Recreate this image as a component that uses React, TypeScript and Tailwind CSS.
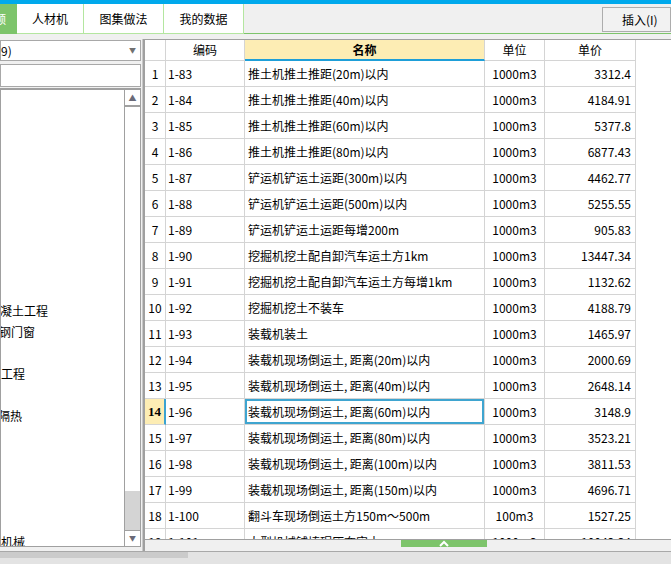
import React from "react";

type Row = { no: number; code: string; name: string; unit: string; price: string };

const C = ",\u2009";

const ROWS: Row[] = [
  { no: 1, code: "1-83", name: "推土机推土推距(20m)以内", unit: "1000m3", price: "3312.4" },
  { no: 2, code: "1-84", name: "推土机推土推距(40m)以内", unit: "1000m3", price: "4184.91" },
  { no: 3, code: "1-85", name: "推土机推土推距(60m)以内", unit: "1000m3", price: "5377.8" },
  { no: 4, code: "1-86", name: "推土机推土推距(80m)以内", unit: "1000m3", price: "6877.43" },
  { no: 5, code: "1-87", name: "铲运机铲运土运距(300m)以内", unit: "1000m3", price: "4462.77" },
  { no: 6, code: "1-88", name: "铲运机铲运土运距(500m)以内", unit: "1000m3", price: "5255.55" },
  { no: 7, code: "1-89", name: "铲运机铲运土运距每增200m", unit: "1000m3", price: "905.83" },
  { no: 8, code: "1-90", name: "挖掘机挖土配自卸汽车运土方1km", unit: "1000m3", price: "13447.34" },
  { no: 9, code: "1-91", name: "挖掘机挖土配自卸汽车运土方每增1km", unit: "1000m3", price: "1132.62" },
  { no: 10, code: "1-92", name: "挖掘机挖土不装车", unit: "1000m3", price: "4188.79" },
  { no: 11, code: "1-93", name: "装载机装土", unit: "1000m3", price: "1465.97" },
  { no: 12, code: "1-94", name: `装载机现场倒运土${C}距离(20m)以内`, unit: "1000m3", price: "2000.69" },
  { no: 13, code: "1-95", name: `装载机现场倒运土${C}距离(40m)以内`, unit: "1000m3", price: "2648.14" },
  { no: 14, code: "1-96", name: `装载机现场倒运土${C}距离(60m)以内`, unit: "1000m3", price: "3148.9" },
  { no: 15, code: "1-97", name: `装载机现场倒运土${C}距离(80m)以内`, unit: "1000m3", price: "3523.21" },
  { no: 16, code: "1-98", name: `装载机现场倒运土${C}距离(100m)以内`, unit: "1000m3", price: "3811.53" },
  { no: 17, code: "1-99", name: `装载机现场倒运土${C}距离(150m)以内`, unit: "1000m3", price: "4696.71" },
  { no: 18, code: "1-100", name: "翻斗车现场倒运土方150m～500m", unit: "100m3", price: "1527.25" },
  { no: 19, code: "1-101", name: "大型机械铺填碾压夯实土", unit: "1000m3", price: "10042.34" },
];

// visible bits of the tree, keyed by row index (21px rows)
const TREE: Record<number, { text: string; shift: string }> = {
  10: { text: "凝土工程", shift: "-ml-[1px]" },
  11: { text: "钢门窗", shift: "-ml-[2px]" },
  13: { text: "工程", shift: "ml-0" },
  15: { text: "隔热", shift: "-ml-[3px]" },
  21: { text: "机械", shift: "ml-0" },
};

const SELECTED = 14;

export default function App() {
  return (
    <div className="w-[671px] h-[564px] overflow-hidden bg-[#f0f0f0] flex flex-col font-['Noto_Sans_CJK_SC',sans-serif] text-[12px] leading-none text-black">
      <div className="h-[4px] bg-[#00a9ec] shrink-0" />

      {/* tabs */}
      <div className="h-[30px] flex shrink-0">
        <div className="w-[17px] bg-[#7dc46b] overflow-hidden text-white flex items-center">
          <span className="-ml-[6px] whitespace-nowrap">额</span>
        </div>
        <div className="w-[67px] bg-white border-r border-b border-[#b4e6a0] flex items-center justify-center">人材机</div>
        <div className="w-[80px] bg-white border-r border-b border-[#b4e6a0] flex items-center justify-center">图集做法</div>
        <div className="w-[80px] bg-white border-r border-b border-[#b4e6a0] flex items-center justify-center">我的数据</div>
        <div className="flex-1 border-b border-[#7dc46b] flex justify-end items-start pt-[3px]">
          <div className="w-[69px] h-[25px] border border-[#adadad] bg-[#f2f2f2] flex items-center pl-[19px] whitespace-nowrap">
            插入(I)
          </div>
        </div>
      </div>

      <div className="h-[5px] shrink-0" />

      {/* main */}
      <div className="h-[512px] flex shrink-0">
        {/* left panel */}
        <div className="w-[141px] flex flex-col">
          <div className="mt-[1px] h-[21px] bg-white border border-[#a8a8a8] flex items-center justify-between pr-[4px]">
            <span>9)</span>
            <span className="text-[7px] text-[#707070]">▼</span>
          </div>
          <div className="mt-[3px] h-[23px] bg-white border border-[#a8a8a8]" />
          <div className="mt-[1px] h-[459px] bg-white border border-t-2 border-[#a0a0a0] flex">
            <div className="flex-1 overflow-hidden">
              {Array.from({ length: 22 }).map((_, i) => (
                <div key={i} className="h-[21px] flex items-center whitespace-nowrap">
                  {TREE[i] ? <span className={TREE[i].shift}>{TREE[i].text}</span> : null}
                </div>
              ))}
            </div>
            <div className="w-[16px] border-l border-[#a0a0a0] flex flex-col">
              <div className="h-[17px] border-b-2 border-[#a0a0a0] flex items-center justify-center text-[8px] text-[#6a6a78]">▲</div>
              <div className="h-[384px] bg-white" />
              <div className="flex-1 bg-[#d4d4d4]" />
              <div className="h-[16px] bg-white border-t border-[#a0a0a0] flex items-center justify-center text-[7px] text-[#6a6a78]">▼</div>
            </div>
          </div>
        </div>

        <div className="w-[2px] border-r border-[#c8c8c8]" />

        {/* grid */}
        <div className="flex-1 flex flex-col border-l-2 border-t border-[#a0a0a0] bg-white overflow-hidden">
          <div className="h-[21px] flex shrink-0">
            <div className="w-[21px] border-r border-b border-[#d4d4d4]" />
            <div className="w-[79px] border-r border-b border-[#d4d4d4] flex items-center justify-center">编码</div>
            <div className="w-[240px] border-r border-b-2 border-b-[#1e9fd8] border-r-[#d4d4d4] bg-[#fdedb4] flex items-center justify-center font-bold">名称</div>
            <div className="w-[60px] border-r border-b border-[#d4d4d4] flex items-center justify-center">单位</div>
            <div className="w-[91px] border-r border-b border-[#d4d4d4] flex items-center justify-center">单价</div>
          </div>

          <div className="h-[478px] overflow-hidden shrink-0">
            {ROWS.map((r) => {
              const sel = r.no === SELECTED;
              return (
                <div key={r.no} className="h-[26px] flex whitespace-nowrap">
                  <div
                    className={
                      sel
                        ? "w-[21px] border-r-2 border-b border-r-[#3aa3d2] border-b-[#d4d4d4] bg-[#fdedb4] flex items-center justify-center font-bold font-['Liberation_Serif',serif] text-[13px]"
                        : "w-[21px] border-r border-b border-[#d4d4d4] flex items-center justify-center"
                    }
                  >
                    {r.no}
                  </div>
                  <div className="w-[79px] border-r border-b border-[#d4d4d4] flex items-center pl-[2px]">{r.code}</div>
                  <div
                    className={
                      sel
                        ? "w-[240px] border-r border-b border-[#d4d4d4] ring-2 ring-inset ring-[#3fa5d0] flex items-center pl-[3px] overflow-hidden"
                        : "w-[240px] border-r border-b border-[#d4d4d4] flex items-center pl-[3px] overflow-hidden"
                    }
                  >
                    {r.name}
                  </div>
                  <div className="w-[60px] border-r border-b border-[#d4d4d4] flex items-center justify-center">{r.unit}</div>
                  <div className="w-[91px] border-r border-b border-[#d4d4d4] flex items-center justify-end pr-[4px]">{r.price}</div>
                </div>
              );
            })}
          </div>

          <div className="flex-1 bg-[#f0f0f0] border-t border-[#a0a0a0]">
            <div className="ml-[256px] w-[86px] h-[7px] bg-[#7dc46b] flex justify-center items-start">
              <svg width="12" height="7" viewBox="0 0 12 7">
                <path d="M2 6 L6 2 L10 6" stroke="#ffffff" strokeWidth="2" fill="none" />
              </svg>
            </div>
          </div>
        </div>
      </div>

      {/* horizontal scrollbar */}
      <div className="flex-1 border-t border-[#a8a8a8] bg-[#e3e3e3]">
        <div className="w-[188px] h-[6px] bg-[#cbcbcb]" />
      </div>
    </div>
  );
}
